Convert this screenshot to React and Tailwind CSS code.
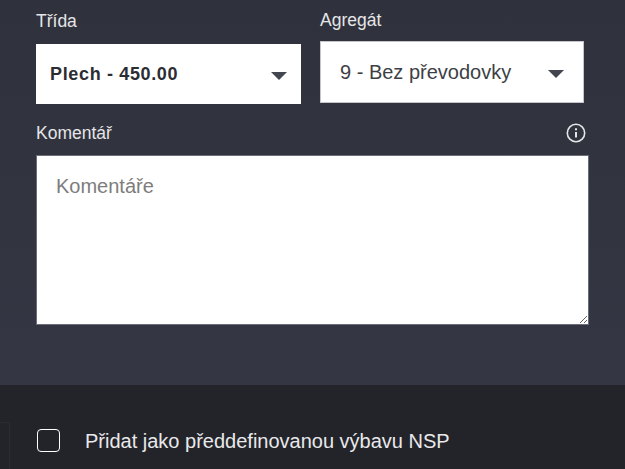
import { useState } from 'react';

function SelectBox({ value, bold, className }) {
  return (
    <div className={`flex items-center justify-between bg-white ${className}`}>
      <span className={bold ? 'text-[18px] font-bold tracking-[0.65px] text-[#2b2d33]' : 'text-[20px] text-[#3d3f45]'}>{value}</span>
      <svg width="16" height="8" viewBox="0 0 16 8" className="shrink-0 mt-[3px]">
        <path d="M0 0h16L8 8z" fill="#43454f" />
      </svg>
    </div>
  );
}

export default function App() {
  const [checked, setChecked] = useState(false);

  return (
    <div className="w-[625px] h-[469px] overflow-hidden flex flex-col font-['Liberation_Sans',Arial,sans-serif]">
      <div className="h-[385px] bg-gradient-to-b from-[#2f313c] to-[#343743] px-9">
        <div className="flex items-start">
          <div className="w-[265px]">
            <div className="pt-[11px] h-[44px] text-[17.5px] leading-[20px] text-[#e6e6e8]">Třída</div>
            <SelectBox value="Plech - 450.00" bold className="h-[60px] px-[14px]" />
          </div>
          <div className="w-[264px] ml-[19px]">
            <div className="pt-[10px] h-[41px] text-[17.5px] leading-[20px] text-[#e6e6e8]">Agregát</div>
            <SelectBox value="9 - Bez převodovky" className="h-[62px] px-[19px] border border-[#c4c5ca]" />
          </div>
        </div>
        <div className="flex items-center justify-between h-[51px] pt-[7px] pr-[3px] text-[17.5px] text-[#e6e6e8]">
          <span>Komentář</span>
          <svg width="20" height="20" viewBox="0 0 20 20" fill="none" stroke="#e6e6e8" strokeWidth="1.6">
            <circle cx="10" cy="10" r="8.7" />
            <path d="M10 9v5.5" strokeWidth="2" />
            <path d="M10 5.2v2" strokeWidth="2" />
          </svg>
        </div>
        <textarea
          placeholder="Komentáře"
          className="block w-[553px] h-[170px] bg-white border border-[#6b6e78] p-[19px] pt-[18px] text-[20px] leading-[24px] text-[#24262c] placeholder:text-[#7d7d7d] outline-none"
        />
      </div>
      <div className="flex-1 flex bg-[#232429]">
        <div className="w-[10px] h-[47px] mt-[37px] border-t border-r border-[#2a2b30]" />
        <label className="flex items-center gap-[25px] h-[23px] ml-[27px] mt-[44px] text-[20px] text-[#e9e9eb]">
          <input
            type="checkbox"
            checked={checked}
            onChange={e => setChecked(e.target.checked)}
            className="appearance-none w-[23px] h-[23px] rounded-[4px] border border-white bg-transparent"
          />
          Přidat jako předdefinovanou výbavu NSP
        </label>
      </div>
    </div>
  );
}
